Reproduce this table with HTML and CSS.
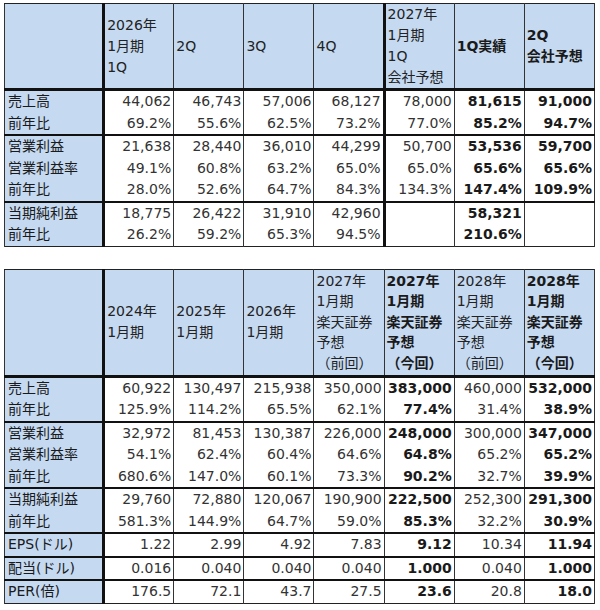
FILE: index.html
```html
<!DOCTYPE html>
<html lang="ja">
<head>
<meta charset="utf-8">
<title>業績表</title>
<link rel="stylesheet" href="styles.css">
</head>
<body>
<table class="grid t1">
  <colgroup>
    <col class="c-lbl"><col class="c-n"><col class="c-n"><col class="c-n"><col class="c-n"><col class="c-n"><col class="c-n"><col class="c-n">
  </colgroup>
  <thead>
    <tr class="hd">
      <th class="lbl"></th>
      <th class="sep">2026年<br>1月期<br>1Q</th>
      <th>2Q</th>
      <th>3Q</th>
      <th>4Q</th>
      <th class="sep">2027年<br>1月期<br>1Q<br>会社予想</th>
      <th class="b">1Q実績</th>
      <th class="b">2Q<br>会社予想</th>
    </tr>
  </thead>
  <tbody>
    <tr class="g"><td class="lbl">売上高</td><td class="sep">44,062</td><td>46,743</td><td>57,006</td><td>68,127</td><td class="sep">78,000</td><td class="b">81,615</td><td class="b">91,000</td></tr>
    <tr><td class="lbl">前年比</td><td class="sep">69.2%</td><td>55.6%</td><td>62.5%</td><td>73.2%</td><td class="sep">77.0%</td><td class="b">85.2%</td><td class="b">94.7%</td></tr>
    <tr class="g"><td class="lbl">営業利益</td><td class="sep">21,638</td><td>28,440</td><td>36,010</td><td>44,299</td><td class="sep">50,700</td><td class="b">53,536</td><td class="b">59,700</td></tr>
    <tr><td class="lbl">営業利益率</td><td class="sep">49.1%</td><td>60.8%</td><td>63.2%</td><td>65.0%</td><td class="sep">65.0%</td><td class="b">65.6%</td><td class="b">65.6%</td></tr>
    <tr><td class="lbl">前年比</td><td class="sep">28.0%</td><td>52.6%</td><td>64.7%</td><td>84.3%</td><td class="sep">134.3%</td><td class="b">147.4%</td><td class="b">109.9%</td></tr>
    <tr class="g"><td class="lbl">当期純利益</td><td class="sep">18,775</td><td>26,422</td><td>31,910</td><td>42,960</td><td class="sep"></td><td class="b">58,321</td><td class="b"></td></tr>
    <tr><td class="lbl">前年比</td><td class="sep">26.2%</td><td>59.2%</td><td>65.3%</td><td>94.5%</td><td class="sep"></td><td class="b">210.6%</td><td class="b"></td></tr>
  </tbody>
</table>

<table class="grid t2">
  <colgroup>
    <col class="c-lbl"><col class="c-n"><col class="c-n"><col class="c-n"><col class="c-n"><col class="c-n"><col class="c-n"><col class="c-n">
  </colgroup>
  <thead>
    <tr class="hd">
      <th class="lbl"></th>
      <th class="sep">2024年<br>1月期</th>
      <th>2025年<br>1月期</th>
      <th>2026年<br>1月期</th>
      <th>2027年<br>1月期<br>楽天証券<br>予想<br>（前回）</th>
      <th class="b">2027年<br>1月期<br>楽天証券<br>予想<br>（今回）</th>
      <th>2028年<br>1月期<br>楽天証券<br>予想<br>（前回）</th>
      <th class="b">2028年<br>1月期<br>楽天証券<br>予想<br>（今回）</th>
    </tr>
  </thead>
  <tbody>
    <tr class="g"><td class="lbl">売上高</td><td class="sep">60,922</td><td>130,497</td><td>215,938</td><td>350,000</td><td class="b">383,000</td><td>460,000</td><td class="b">532,000</td></tr>
    <tr><td class="lbl">前年比</td><td class="sep">125.9%</td><td>114.2%</td><td>65.5%</td><td>62.1%</td><td class="b">77.4%</td><td>31.4%</td><td class="b">38.9%</td></tr>
    <tr class="g"><td class="lbl">営業利益</td><td class="sep">32,972</td><td>81,453</td><td>130,387</td><td>226,000</td><td class="b">248,000</td><td>300,000</td><td class="b">347,000</td></tr>
    <tr><td class="lbl">営業利益率</td><td class="sep">54.1%</td><td>62.4%</td><td>60.4%</td><td>64.6%</td><td class="b">64.8%</td><td>65.2%</td><td class="b">65.2%</td></tr>
    <tr><td class="lbl">前年比</td><td class="sep">680.6%</td><td>147.0%</td><td>60.1%</td><td>73.3%</td><td class="b">90.2%</td><td>32.7%</td><td class="b">39.9%</td></tr>
    <tr class="g"><td class="lbl">当期純利益</td><td class="sep">29,760</td><td>72,880</td><td>120,067</td><td>190,900</td><td class="b">222,500</td><td>252,300</td><td class="b">291,300</td></tr>
    <tr><td class="lbl">前年比</td><td class="sep">581.3%</td><td>144.9%</td><td>64.7%</td><td>59.0%</td><td class="b">85.3%</td><td>32.2%</td><td class="b">30.9%</td></tr>
    <tr class="g"><td class="lbl">EPS(ドル)</td><td class="sep">1.22</td><td>2.99</td><td>4.92</td><td>7.83</td><td class="b">9.12</td><td>10.34</td><td class="b">11.94</td></tr>
    <tr class="g"><td class="lbl">配当(ドル)</td><td class="sep">0.016</td><td>0.040</td><td>0.040</td><td>0.040</td><td class="b">1.000</td><td>0.040</td><td class="b">1.000</td></tr>
    <tr class="g"><td class="lbl">PER(倍)</td><td class="sep">176.5</td><td>72.1</td><td>43.7</td><td>27.5</td><td class="b">23.6</td><td>20.8</td><td class="b">18.0</td></tr>
  </tbody>
</table>
</body>
</html>
```

FILE: styles.css
```css
html, body {
  background: #ffffff;
}
body {
  margin: 3px 0 0 4px;
  font-family: "DejaVu Sans", "Noto Sans CJK JP", sans-serif;
  font-size: 14px;
  color: #333;
}
.grid {
  border-collapse: collapse;
  table-layout: fixed;
  width: 591px;
  border: 1px solid #222;
}
.t2 {
  margin-top: 22px;
}
.c-lbl { width: 99px; }
.c-n { width: 70px; }

.grid th,
.grid td {
  border-left: 1px solid #333;
  border-right: 1px solid #333;
  border-top: none;
  border-bottom: none;
  padding: 0 2px 0 2px;
  white-space: nowrap;
  overflow: hidden;
}
.grid td {
  height: 21.5px;
  line-height: 21px;
  text-align: right;
}
.hd th {
  background: #c5d9f1;
  text-align: left;
  vertical-align: middle;
  font-weight: normal;
  color: #222;
  border-bottom: 3px solid #111;
  border-top: 1px solid #222;
}
.t1 .hd th {
  height: 84px;
  line-height: 21px;
}
.t2 .hd th {
  height: 105px;
  line-height: 20.6px;
}
.grid .lbl {
  background: #c5d9f1;
  text-align: left;
  padding-left: 3px;
  color: #1a1a1a;
}
.grid tr.g td {
  border-top: 2px solid #111;
}
.grid .sep {
  border-left: 3px solid #111;
}
.t2 .hd th.sep,
.t2 td.sep {
  border-left: 3px solid #111;
}
.grid .b {
  font-weight: bold;
  color: #1a1a1a;
}
```
